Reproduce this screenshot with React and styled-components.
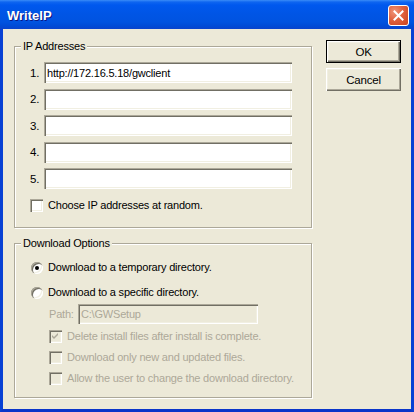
import styled, { createGlobalStyle } from "styled-components";

const GlobalStyle = createGlobalStyle`
  html, body {
    margin: 0;
    padding: 0;
    background: #ffffff;
  }
`;

const ipList = ["http://172.16.5.18/gwclient", "", "", "", ""];

export default function App() {
  return (
    <>
      <GlobalStyle />
      <Window>
        <TitleBar>
          <Title>WriteIP</Title>
          <CloseButton aria-label="Close">
            <svg width="11" height="11" viewBox="0 0 11 11">
              <path d="M1.5 1.5 L9.5 9.5 M9.5 1.5 L1.5 9.5" stroke="#fff" strokeWidth="2" strokeLinecap="square" />
            </svg>
          </CloseButton>
        </TitleBar>
        <Body>
          <LeftCol>
            <GroupBox $height={182}>
              <Caption>IP Addresses</Caption>
              <Rows>
                {ipList.map((ip, i) => (
                  <IpRow key={i}>
                    <RowNumber>{i + 1}.</RowNumber>
                    <EditBox defaultValue={ip} $width={248} />
                  </IpRow>
                ))}
              </Rows>
              <CheckRow $top={10}>
                <CheckBox />
                <Label>Choose IP addresses at random.</Label>
              </CheckRow>
            </GroupBox>

            <GroupBox $height={155}>
              <Caption>Download Options</Caption>
              <RadioRow $top={17}>
                <Radio $checked />
                <Label>Download to a temporary directory.</Label>
              </RadioRow>
              <RadioRow $top={12}>
                <Radio />
                <Label>Download to a specific directory.</Label>
              </RadioRow>
              <Indented>
                <PathRow>
                  <PathLabel>Path:</PathLabel>
                  <EditBox defaultValue="C:\GWSetup" $width={180} $height={20} $disabled disabled />
                </PathRow>
                <CheckRow $top={6}>
                  <CheckBox $disabled>
                    <svg width="7" height="7" viewBox="0 0 7 7">
                      <path d="M0 2 L2 4 L6 0 L6 2 L2 6 L0 4 Z" fill="#ACA899" />
                    </svg>
                  </CheckBox>
                  <Label $disabled>Delete install files after install is complete.</Label>
                </CheckRow>
                <CheckRow $top={8}>
                  <CheckBox $disabled />
                  <Label $disabled>Download only new and updated files.</Label>
                </CheckRow>
                <CheckRow $top={8}>
                  <CheckBox $disabled />
                  <Label $disabled>Allow the user to change the download directory.</Label>
                </CheckRow>
              </Indented>
            </GroupBox>
          </LeftCol>

          <ButtonCol>
            <PushButton $default>OK</PushButton>
            <PushButton>Cancel</PushButton>
          </ButtonCol>
        </Body>
      </Window>
    </>
  );
}

const Window = styled.div`
  width: 414px;
  height: 412px;
  display: flex;
  flex-direction: column;
  font-family: "Liberation Sans", Arial, sans-serif;
  font-size: 11px;
  letter-spacing: -0.2px;
  color: #000;
`;

const TitleBar = styled.div`
  height: 29px;
  flex: none;
  display: flex;
  align-items: center;
  justify-content: space-between;
  padding: 0 5px 0 7px;
  box-sizing: border-box;
  background: linear-gradient(
    to bottom,
    #3a8cf7 0px,
    #0f66f0 2px,
    #0058ee 5px,
    #0055e5 14px,
    #0053e0 22px,
    #004bd6 26px,
    #0a43cc 29px
  );
`;

const Title = styled.span`
  font-family: "Liberation Sans", Arial, sans-serif;
  font-weight: bold;
  font-size: 13px;
  letter-spacing: 0;
  color: #fff;
  text-shadow: 1px 1px 0 #0a1883;
  padding-top: 1px;
`;

const CloseButton = styled.div`
  width: 21px;
  height: 21px;
  box-sizing: border-box;
  border: 1px solid #fff;
  border-radius: 3px;
  background: radial-gradient(circle at 30% 30%, #f0957a 0%, #e0623f 45%, #c9411c 100%);
  display: flex;
  align-items: center;
  justify-content: center;
  margin-top: 1px;
`;

const Body = styled.div`
  flex: 1;
  display: flex;
  align-items: flex-start;
  gap: 14px;
  padding: 11px 0 0 11px;
  background: #ece9d8;
  border-left: 3px solid #0841d4;
  border-right: 3px solid #0841d4;
  border-bottom: 3px solid #0a35c9;
`;

const LeftCol = styled.div`
  margin-top: 6px;
  display: flex;
  flex-direction: column;
  gap: 15px;
`;

const GroupBox = styled.div`
  position: relative;
  width: 298px;
  height: ${(p) => p.$height}px;
  box-sizing: border-box;
  border: 1px solid #aca899;
  box-shadow: 1px 1px 0 #fff, inset 1px 1px 0 #fff;
  padding: 0 0 0 15px;
  display: flex;
  flex-direction: column;
`;

const Caption = styled.span`
  position: absolute;
  top: -8px;
  left: 6px;
  padding: 0 2px;
  line-height: 14px;
  background: #ece9d8;
`;

const Rows = styled.div`
  margin-top: 15px;
  display: flex;
  flex-direction: column;
  gap: 5.5px;
`;

const IpRow = styled.div`
  display: flex;
  align-items: center;
  height: 21px;
`;

const RowNumber = styled.span`
  width: 14px;
  flex: none;
  font-size: 11.5px;
`;

const EditBox = styled.input`
  width: ${(p) => p.$width}px;
  height: ${(p) => p.$height || 21}px;
  box-sizing: border-box;
  margin: 0;
  border: none;
  outline: none;
  padding: 0 3px;
  font: inherit;
  letter-spacing: inherit;
  color: ${(p) => (p.$disabled ? "#aca899" : "#000")};
  background: ${(p) => (p.$disabled ? "#ece9d8" : "#fff")};
  box-shadow: inset 1px 1px 0 #aca899, inset 2px 2px 0 #716f64, inset -1px -1px 0 #fff,
    inset -2px -2px 0 #f1efe2;
`;

const CheckRow = styled.div`
  display: flex;
  align-items: center;
  gap: 5px;
  height: 13px;
  margin-top: ${(p) => p.$top}px;
`;

const CheckBox = styled.span`
  width: 13px;
  height: 13px;
  flex: none;
  box-sizing: border-box;
  display: flex;
  align-items: center;
  justify-content: center;
  background: ${(p) => (p.$disabled ? "#ece9d8" : "#fff")};
  box-shadow: inset 1px 1px 0 #aca899, inset 2px 2px 0 #716f64, inset -1px -1px 0 #fff,
    inset -2px -2px 0 #f1efe2;
`;

const RadioRow = styled.div`
  display: flex;
  align-items: center;
  gap: 5px;
  height: 13px;
  margin-top: ${(p) => p.$top}px;
`;

const Radio = styled.span`
  position: relative;
  width: 12px;
  height: 12px;
  margin-left: 1px;
  flex: none;
  border-radius: 50%;
  background: #fff;
  box-shadow: inset 1px 1px 0 #aca899, inset 2px 2px 0 #716f64, inset -1px -1px 0 #fff,
    inset -2px -2px 0 #f1efe2;

  &::after {
    content: "";
    display: ${(p) => (p.$checked ? "block" : "none")};
    position: absolute;
    left: 4px;
    top: 4px;
    width: 4px;
    height: 4px;
    border-radius: 50%;
    background: #000;
  }
`;

const Label = styled.span`
  white-space: nowrap;
  line-height: 13px;
  color: ${(p) => (p.$disabled ? "#aca899" : "#000")};
`;

const Indented = styled.div`
  padding-left: 19px;
  display: flex;
  flex-direction: column;
`;

const PathRow = styled.div`
  display: flex;
  align-items: center;
  margin-top: 5px;
`;

const PathLabel = styled.span`
  width: 29px;
  flex: none;
  color: #aca899;
`;

const ButtonCol = styled.div`
  display: flex;
  flex-direction: column;
  gap: 5px;
`;

const PushButton = styled.div`
  width: 75px;
  height: 23px;
  box-sizing: border-box;
  display: flex;
  align-items: center;
  justify-content: center;
  background: #ece9d8;
  border: ${(p) => (p.$default ? "1px solid #000" : "none")};
  box-shadow: inset 1px 1px 0 #fff, inset -1px -1px 0 #716f64, inset -2px -2px 0 #aca899,
    inset 2px 2px 0 #f1efe2;
  font-size: 11.5px;
  padding-top: 1px;
`;
